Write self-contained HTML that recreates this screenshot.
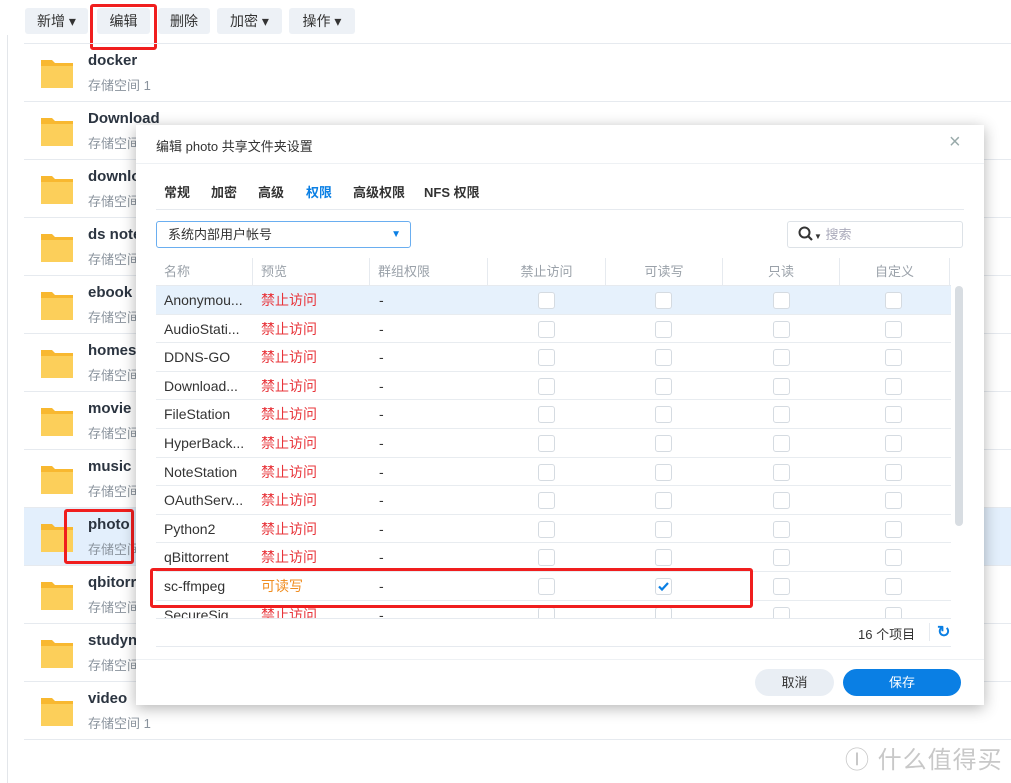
<!DOCTYPE html>
<html><head><meta charset="utf-8"><style>
*{box-sizing:border-box;margin:0;padding:0}
body{width:1011px;height:783px;overflow:hidden;background:#fff;font-family:"Liberation Sans","Noto Sans CJK SC",sans-serif;position:relative;color:#333}
.a{position:absolute}
.btn{position:absolute;top:8px;height:26px;background:#edf1f6;border-radius:3px;font-size:14px;color:#333;text-align:center;line-height:26px}
.red{position:absolute;border:3px solid #f01e1e;border-radius:3px}
.row{position:absolute;left:24px;width:987px;height:58px;border-bottom:1px solid #e6eaef}
.fold{position:absolute;left:17px;top:14px;width:32px;height:30px}
.nm{position:absolute;left:64px;top:8px;font-size:15px;font-weight:bold;color:#2b3440}
.sb{position:absolute;left:64px;top:31px;font-size:13px;color:#8a939d}
.th{position:absolute;top:258px;height:28px;font-size:13px;color:#9aa1a9;line-height:28px;border-right:1px solid #e6eaef}
.tr{position:absolute;left:156px;width:795px;height:28.6px;border-bottom:1px solid #e8ecf0;font-size:14px;line-height:28px}
.cb{position:absolute;top:6px;width:17px;height:17px;border:1px solid #d5dbe1;border-radius:3px;background:#fff}
.cb svg{position:absolute;left:0;top:0;display:block}
</style></head><body>
<div class="a" style="left:7px;top:35px;width:1px;height:748px;background:#e3e6ea"></div>
<div class="btn" style="left:25px;width:63px">新增 ▾</div>
<div class="btn" style="left:97px;width:53px">编辑</div>
<div class="btn" style="left:158px;width:52px">删除</div>
<div class="btn" style="left:217px;width:65px">加密 ▾</div>
<div class="btn" style="left:289px;width:66px">操作 ▾</div>
<div class="red" style="left:90px;top:4px;width:67px;height:46px"></div>
<div class="a" style="left:24px;top:43px;width:987px;height:1px;background:#e6eaef"></div>
<div id="rows"></div>
<script>
var n=[["docker","存储空间 1"],["Download","存储空间"],["downlo","存储空间"],["ds note","存储空间"],["ebook","存储空间"],["homes","存储空间"],["movie","存储空间"],["music","存储空间"],["photo","存储空间"],["qbitorr","存储空间"],["studyn","存储空间"],["video","存储空间 1"]];
var h="";n.forEach(function(r,i){h+='<div class="row" style="top:'+(44+i*58)+'px;'+(i==8?'background:#e3effc':'')+'"><svg class="fold" viewBox="0 0 32 30"><path d="M0 2h11l3 3h18v25H0z" fill="#f8b830"/><path d="M0 8h32v22H0z" fill="#fccf5a"/></svg><div class="nm">'+r[0]+'</div><div class="sb">'+r[1]+'</div></div>'});
document.getElementById("rows").innerHTML=h;
</script>
<div class="red" style="left:64px;top:509px;width:70px;height:55px"></div>
<div class="a" style="left:136px;top:125px;width:848px;height:580px;background:#fff;box-shadow:0 3px 14px rgba(0,0,0,.3)">
<div class="a" style="left:20px;top:11px;font-size:13px;color:#333">编辑 photo 共享文件夹设置</div>
<div class="a" style="left:813px;top:6px;font-size:20px;color:#9aa">×</div>
<div class="a" style="left:0;top:38px;width:848px;height:1px;background:#eef1f4"></div>
<div class="a" style="left:20px;top:84px;width:808px;height:1px;background:#e6eaef"></div>
<div class="a" style="top:57px;left:28px;font-size:13px;font-weight:bold;color:#333">常规</div>
<div class="a" style="top:57px;left:75px;font-size:13px;font-weight:bold">加密</div>
<div class="a" style="top:57px;left:122px;font-size:13px;font-weight:bold">高级</div>
<div class="a" style="top:57px;left:170px;font-size:13px;font-weight:bold;color:#0a7fe4">权限</div>
<div class="a" style="top:57px;left:217px;font-size:13px;font-weight:bold">高级权限</div>
<div class="a" style="top:57px;left:288px;font-size:13px;font-weight:bold">NFS 权限</div>
<div class="a" style="left:20px;top:96px;width:255px;height:27px;border:1px solid #6aaef0;border-radius:3px;font-size:13px;line-height:25px;padding-left:11px">系统内部用户帐号<span style="position:absolute;right:9px;top:0;color:#0a7fe4;font-size:10px">▼</span></div>
<div class="a" style="left:651px;top:96px;width:176px;height:27px;border:1px solid #dde2e7;border-radius:3px;font-size:13px;line-height:25px;padding-left:10px;color:#aab">
<svg width="16" height="16" viewBox="0 0 16 16" style="vertical-align:-3px"><circle cx="6.5" cy="6.5" r="5" fill="none" stroke="#333" stroke-width="2"/><path d="M10 10l4 4" stroke="#333" stroke-width="2.2"/></svg><span style="color:#333;font-size:8px">▼</span> 搜索</div>
</div>
<div class="th" style="left:156px;width:97px;padding-left:8px">名称</div>
<div class="th" style="left:253px;width:117px;padding-left:8px">预览</div>
<div class="th" style="left:370px;width:118px;padding-left:8px">群组权限</div>
<div class="th" style="left:488px;width:118px;text-align:center">禁止访问</div>
<div class="th" style="left:606px;width:117px;text-align:center">可读写</div>
<div class="th" style="left:723px;width:117px;text-align:center">只读</div>
<div class="th" style="left:840px;width:110px;text-align:center">自定义</div>
<div class="a" style="left:156px;top:285px;width:795px;height:1px;background:#e6eaef"></div>
<div id="tb" class="a" style="left:0;top:0;width:1011px;height:618px;overflow:hidden;clip-path:inset(286px 0 0 0)"></div>
<script>
var u=["Anonymou...","AudioStati...","DDNS-GO","Download...","FileStation","HyperBack...","NoteStation","OAuthServ...","Python2","qBittorrent","sc-ffmpeg","SecureSig..."];
var t="";u.forEach(function(x,i){var ff=i==10;t+='<div class="tr" style="top:'+(286+i*28.6)+'px;'+(i==0?'background:#e6f1fc':'')+'"><span style="position:absolute;left:8px;color:#333">'+x+'</span><span style="position:absolute;left:105px;color:'+(ff?'#f08c1e':'#e8343a')+'">'+(ff?'可读写':'禁止访问')+'</span><span style="position:absolute;left:223px">-</span>';
[382,499,617,729].forEach(function(c,j){t+='<div class="cb" style="left:'+c+'px">'+(ff&&j==1?'<svg width="15" height="15" viewBox="0 0 15 15"><path d="M3 7.5l3 3 6-6.5" fill="none" stroke="#0a7fe4" stroke-width="2.2"/></svg>':'')+'</div>'});t+='</div>'});
document.getElementById("tb").innerHTML=t;
</script>
<div class="a" style="left:955px;top:286px;width:8px;height:240px;background:#d8dde2;border-radius:4px"></div>
<div class="red" style="left:150px;top:568px;width:603px;height:40px"></div>
<div class="a" style="left:156px;top:618px;width:795px;height:1px;background:#e6eaef"></div>
<div class="a" style="left:858px;top:624px;font-size:13px;color:#333">16 个项目</div>
<div class="a" style="left:929px;top:623px;width:1px;height:18px;background:#e6eaef"></div>
<div class="a" style="left:937px;top:622px;font-size:16px;font-weight:bold;color:#0a7fe4">↻</div>
<div class="a" style="left:156px;top:646px;width:795px;height:1px;background:#e6eaef"></div>
<div class="a" style="left:136px;top:659px;width:848px;height:1px;background:#eef1f4"></div>
<div class="a" style="left:755px;top:669px;width:79px;height:27px;border-radius:14px;background:#e9eef4;text-align:center;line-height:27px;font-size:13px">取消</div>
<div class="a" style="left:843px;top:669px;width:118px;height:27px;border-radius:14px;background:#0a7fe4;color:#fff;text-align:center;line-height:27px;font-size:13px">保存</div>
<div class="a" style="left:845px;top:740px;font-size:24px;color:#c8c8c8;letter-spacing:1px">Ⓘ 什么值得买</div>
</body></html>
